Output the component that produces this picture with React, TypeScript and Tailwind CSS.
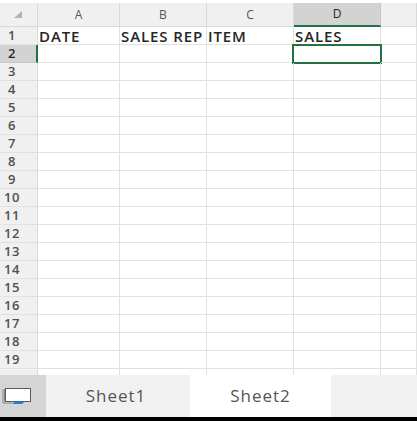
import React from 'react';

const COLS = ['A', 'B', 'C', 'D', 'E'];
const ROWS = Array.from({ length: 19 }, (_, i) => i + 1);

const cellText: Record<string, string> = {
  '1A': 'DATE',
  '1B': 'SALES REP',
  '1C': 'ITEM',
  '1D': 'SALES',
};

const font = { fontFamily: '"Open Sans", "Liberation Sans", sans-serif' };

const CornerMark = () => (
  <svg width="9" height="8" viewBox="0 0 9 8" className="block">
    <polygon points="8,0 8,7 0,7" fill="#b3b3b3" />
  </svg>
);

const SheetListIcon = () => (
  <svg width="32" height="20" viewBox="0 0 32 20" className="block">
    <path d="M1 3 V17 H10" fill="none" stroke="#8a8a8a" strokeWidth="1" />
    <path d="M2.5 3 V15.5" fill="none" stroke="#8a8a8a" strokeWidth="1" />
    <rect x="3.5" y="2.5" width="25" height="13" fill="#fff" stroke="#5a5a5a" strokeWidth="1" />
    <path d="M10 18 L13 15.5 H23 L20 18 Z" fill="#2b7bd4" />
  </svg>
);

export default function App() {
  return (
    <div className="w-[417px] h-[421px] bg-white flex flex-col overflow-hidden select-none" style={font}>
      <div className="h-[375px] flex flex-col overflow-hidden">
        <div className="h-[3px] bg-white shrink-0" />
        {/* column headers */}
        <div className="grid grid-cols-[38px_82px_87px_87px_87px_1fr] h-[24px] shrink-0">
          <div className="bg-[#f0f0f0] border-r border-b border-[#d9d9d9] flex items-start pl-[14px] pt-[8px]">
            <CornerMark />
          </div>
          {COLS.map((c) =>
            c === 'D' ? (
              <div
                key={c}
                className="bg-[#d3d3d3] border-r border-[#c8c8c8] border-b-2 border-b-[#217346] flex items-center justify-center text-[12px] text-[#262626]"
              >
                {c}
              </div>
            ) : (
              <div
                key={c}
                className="bg-[#f0f0f0] border-r border-b border-[#d9d9d9] flex items-center justify-center text-[12px] text-[#555]"
              >
                {c === 'E' ? '' : c}
              </div>
            )
          )}
        </div>
        {/* rows */}
        <div className="grid grid-cols-[38px_82px_87px_87px_87px_1fr] auto-rows-[18px]">
          {ROWS.map((r) => (
            <React.Fragment key={r}>
              <div
                className={
                  r === 2
                    ? 'bg-[#d3d3d3] border-b border-[#c8c8c8] border-r-2 border-r-[#217346] flex items-center justify-center pr-[12px] text-[13px] font-semibold tracking-[0.5px] text-[#262626]'
                    : 'bg-[#f0f0f0] border-b border-[#e2e2e2] border-r border-r-[#d9d9d9] flex items-center justify-center pr-[13px] text-[13px] font-semibold tracking-[0.5px] text-[#505050]'
                }
              >
                {r}
              </div>
              {COLS.map((c) => (
                <div
                  key={c}
                  className="relative border-r border-b border-[#e1e1e1] flex items-center pl-[1px] pt-[1px] text-[15px] font-semibold tracking-[0.9px] text-[#262626] whitespace-nowrap overflow-visible"
                >
                  {cellText[`${r}${c}`]}
                  {r === 2 && c === 'D' && (
                    <div className="absolute -left-[2px] -top-[1px] -right-[2px] -bottom-[2px] border-2 border-[#217346]" />
                  )}
                </div>
              ))}
            </React.Fragment>
          ))}
          <div className="h-[6px] bg-[#f0f0f0] border-r border-[#d9d9d9]" />
          {COLS.map((c) => (
            <div key={c} className="h-[6px] border-r border-[#e1e1e1]" />
          ))}
        </div>
      </div>
      {/* sheet tabs */}
      <div className="h-[42px] flex shrink-0 text-[17px] tracking-[1px] text-[#555]">
        <div className="w-[46px] bg-[#d5d5d5] flex items-center pl-[2px]">
          <SheetListIcon />
        </div>
        <div className="w-[144px] bg-[#f1f1f1] flex items-center justify-center pr-[4px]">Sheet1</div>
        <div className="w-[141px] bg-white flex items-center justify-center">Sheet2</div>
        <div className="flex-1 bg-[#f1f1f1]" />
      </div>
      <div className="h-[4px] bg-black shrink-0" />
    </div>
  );
}
